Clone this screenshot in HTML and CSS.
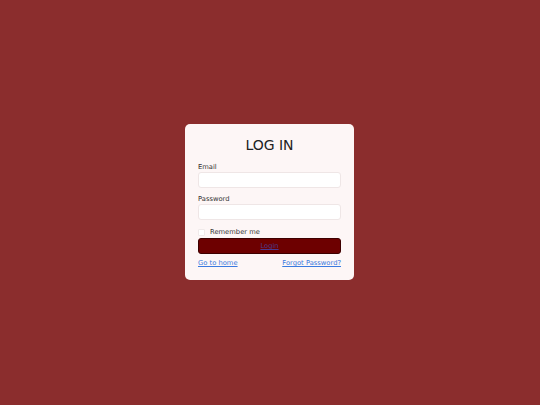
FILE: index.html
```html
<!DOCTYPE html>
<html lang="en">
<head>
<meta charset="utf-8">
<title>Log in</title>
<link rel="stylesheet" href="styles.css">
</head>
<body>
<main class="page">
  <form class="card">
    <h1 class="title">LOG IN</h1>
    <label class="label" for="email">Email</label>
    <input class="input" id="email" type="email">
    <label class="label" for="password">Password</label>
    <input class="input" id="password" type="password">
    <div class="remember">
      <span class="checkbox"></span>
      <span class="remember-text">Remember me</span>
    </div>
    <button class="btn" type="button"><a href="#" class="btn-link">Login</a></button>
    <div class="links">
      <a href="#" class="link">Go to home</a>
      <a href="#" class="link">Forgot Password?</a>
    </div>
  </form>
</main>
</body>
</html>
```

FILE: styles.css
```css
html, body {
  margin: 0;
  padding: 0;
}
body {
  background: #8b2d2d;
  font-family: "DejaVu Sans", Verdana, sans-serif;
}
.page {
  box-sizing: border-box;
  min-height: 100vh;
  padding: 0 1px 1px 0;
  display: flex;
  align-items: center;
  justify-content: center;
}
.card {
  box-sizing: border-box;
  width: 169px;
  background: #fdf6f6;
  border-radius: 5px;
  padding: 13px 13px 13px;
  display: flex;
  flex-direction: column;
}
.title {
  margin: 0 0 10px;
  font-size: 14px;
  font-weight: normal;
  line-height: 16px;
  color: #222;
  text-align: center;
}
.label {
  font-size: 6.75px;
  line-height: 8px;
  color: #333;
  margin-bottom: 1px;
}
.input {
  box-sizing: border-box;
  height: 16px;
  margin: 0 0 7px;
  border: 1px solid #efe6e6;
  border-radius: 3px;
  background: #fff;
  padding: 0 4px;
  font-size: 7px;
}
.remember {
  display: flex;
  align-items: center;
  gap: 5px;
  height: 8px;
  margin-top: 1px;
  margin-bottom: 2px;
}
.checkbox {
  box-sizing: border-box;
  width: 7px;
  height: 7px;
  border: 1px solid #f0eaea;
  border-radius: 1px;
  background: #fff;
}
.remember-text {
  font-size: 6.75px;
  line-height: 8px;
  color: #333;
}
.btn {
  box-sizing: border-box;
  height: 16px;
  margin: 0 0 5px;
  padding: 0;
  background: #6d0000;
  border: 1px solid #3d0000;
  border-radius: 3px;
  display: flex;
  align-items: center;
  justify-content: center;
}
.btn-link {
  font-family: "DejaVu Sans", Verdana, sans-serif;
  font-size: 6.75px;
  line-height: 8px;
  color: #4b3a8f;
  text-decoration: underline;
}
.links {
  display: flex;
  justify-content: space-between;
  line-height: 8px;
}
.link {
  font-size: 6.75px;
  color: #3a7ae0;
  text-decoration: underline;
}
```
